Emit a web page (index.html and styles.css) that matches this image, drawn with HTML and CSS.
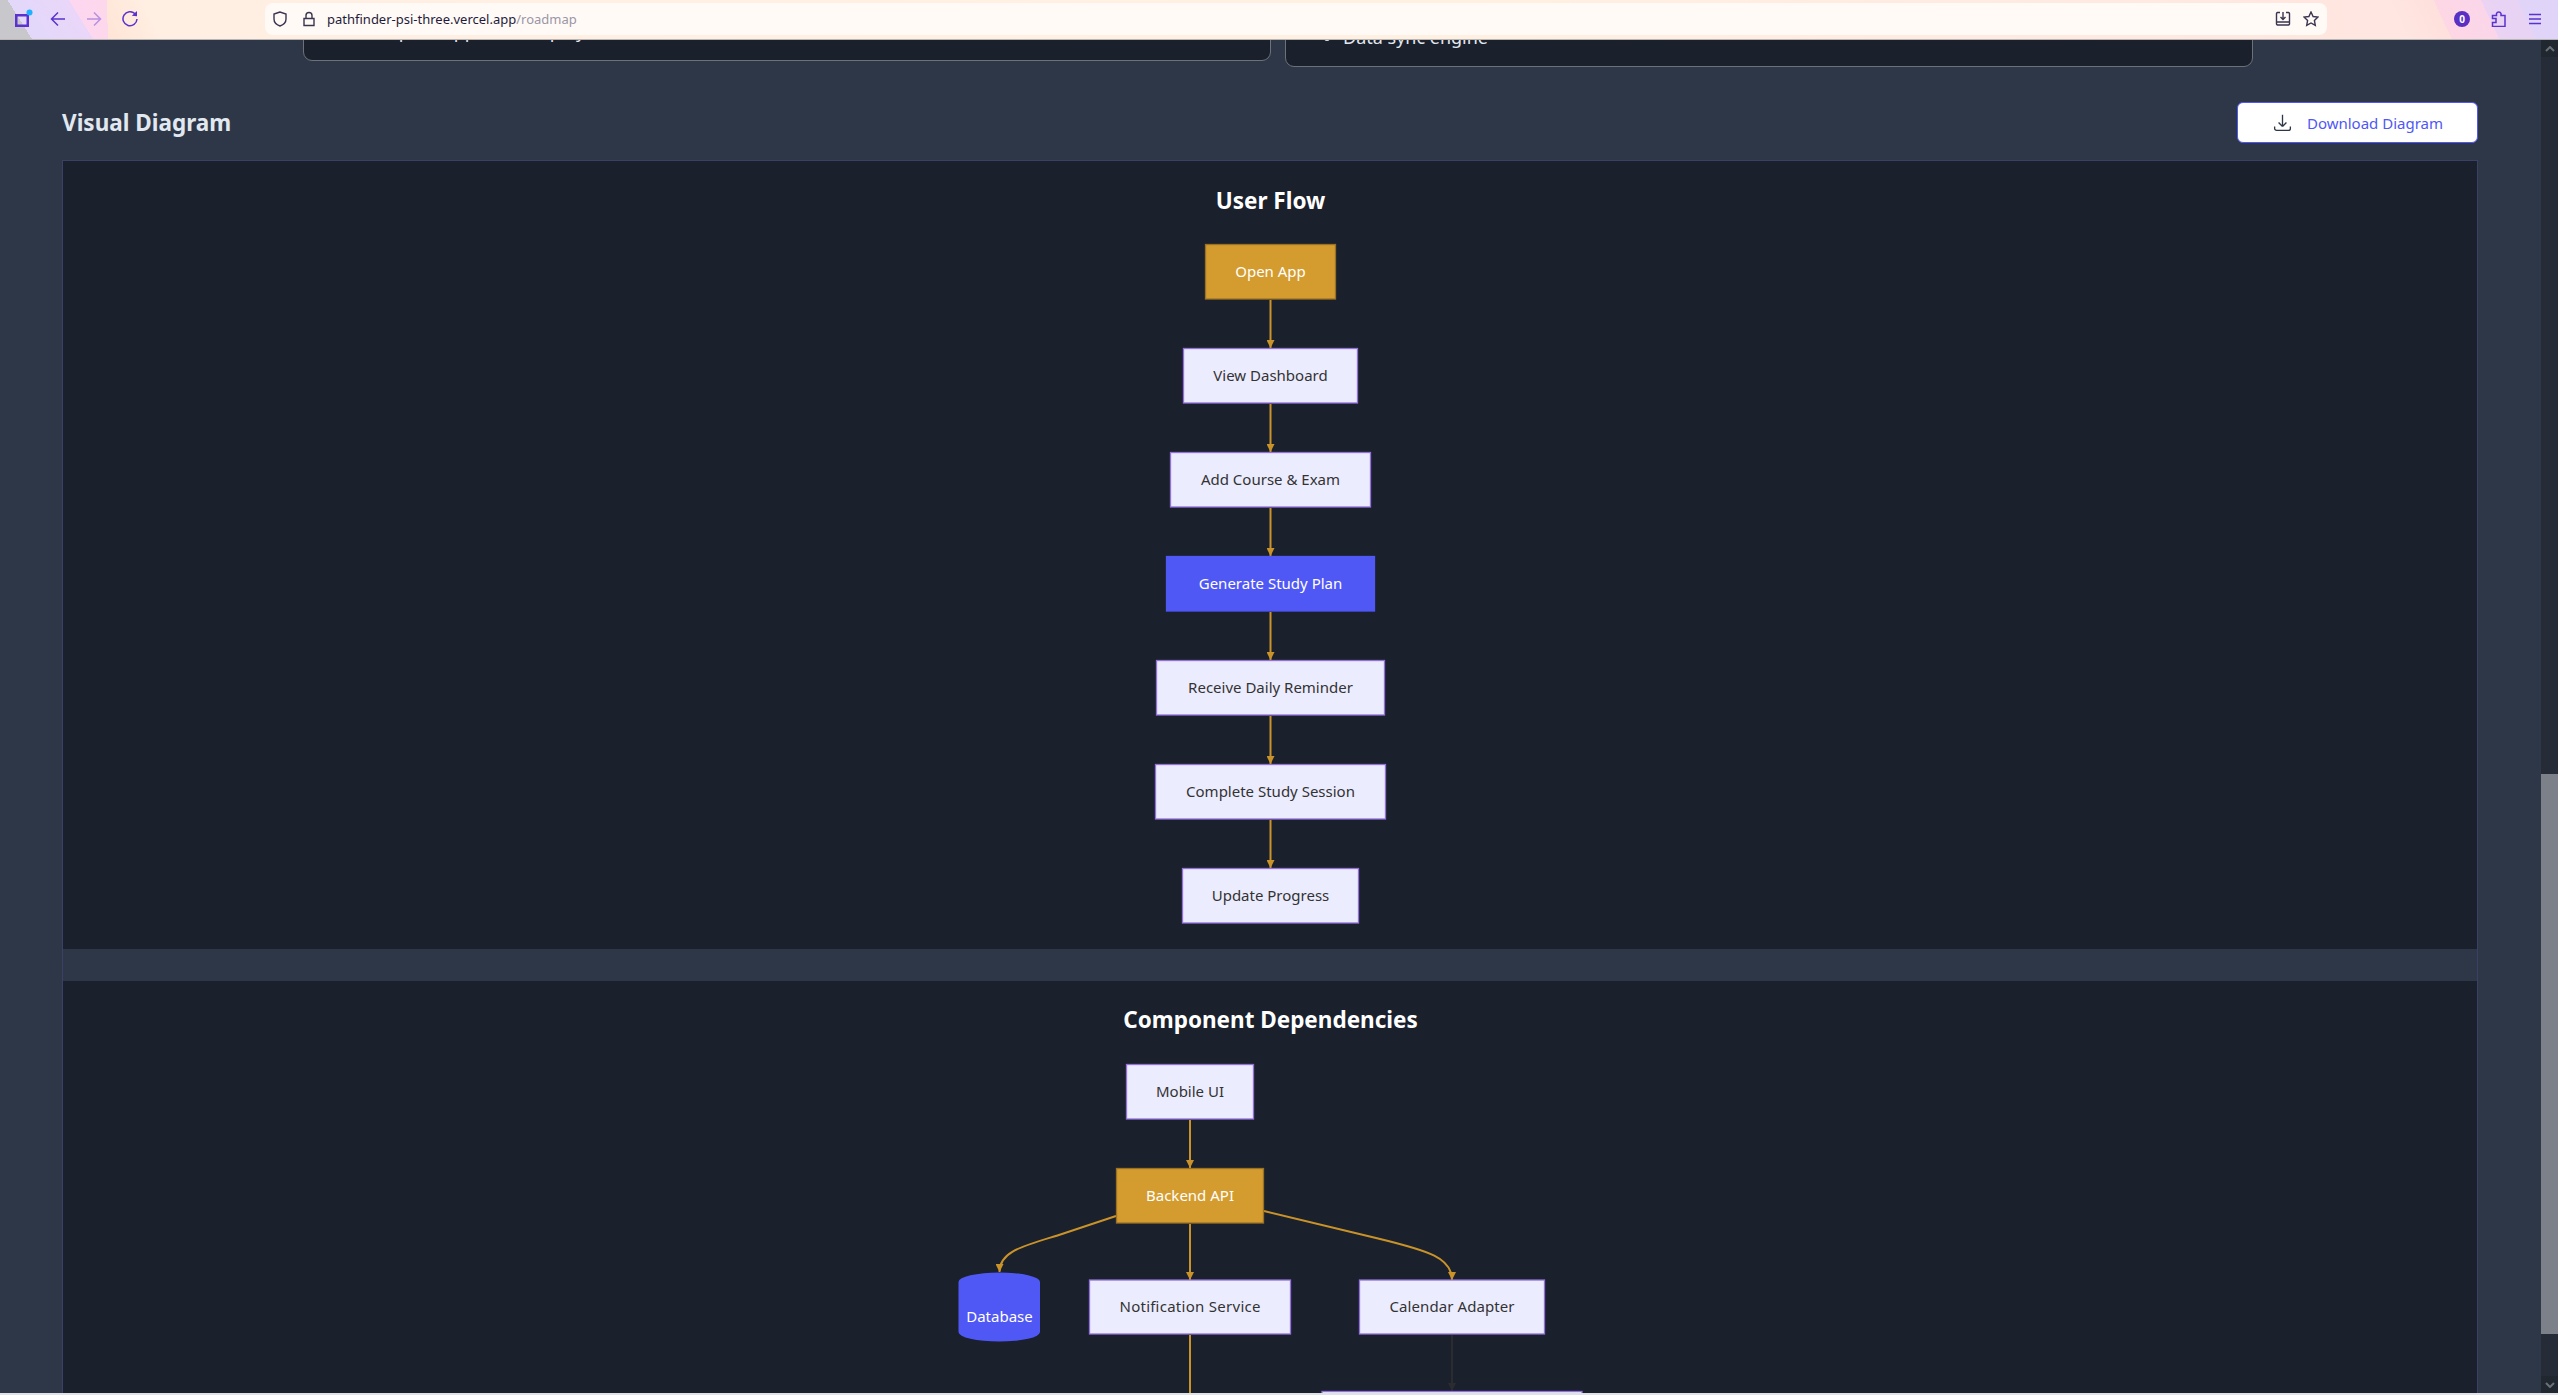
FILE: index.html
```html
<!DOCTYPE html>
<html lang="en">
  <head>
    <meta charset="UTF-8" />
    <meta name="viewport" content="width=device-width, initial-scale=1.0" />
    <title>Pathfinder - Roadmap</title>
    <link rel="stylesheet" href="styles.css">
  </head>
  <body>
    <header class="toolbar">
      <div class="nav-icons">
        <svg class="icon tabs-icon" viewBox="0 0 20 20" width="20" height="20"><path class="purple-fill" d="M2 5h14v13H2zM4.500 7.500v8h9v-8z"/><circle cx="16.500" cy="3.500" r="3" fill="#1cb2ff"/></svg>
        <svg class="icon" viewBox="0 0 16 16" width="16" height="16"><path class="purple" d="M15 8H1.500M8 1.500 1.500 8 8 14.500"/></svg>
        <svg class="icon faded" viewBox="0 0 16 16" width="16" height="16"><path class="purple" d="M1 8h13.500M8 1.500 14.500 8 8 14.500"/></svg>
        <svg class="icon" viewBox="0 0 16 16" width="16" height="16"><path class="purple" d="M13 2.800A7 7 0 1 0 15 8"/><path class="purple-fill" d="M9.800 4.800 15 0v5.200z"/></svg>
      </div>
      <div class="urlbar">
        <svg class="icon" viewBox="0 0 16 16" width="16" height="16"><path class="ink" d="M8 1 2 3v5c0 3.500 2.500 5.800 6 7 3.500-1.200 6-3.500 6-7V3z"/></svg>
        <svg class="icon" viewBox="0 0 16 16" width="16" height="16"><path class="ink" d="M3 7.500h10v7H3zM5 7.500V4.500a3 3 0 0 1 6 0v3"/></svg>
        <span class="url">pathfinder-psi-three.vercel.app<span class="url-path">/roadmap</span></span>
        <span class="urlbar-end">
          <svg class="icon" viewBox="0 0 16 16" width="16" height="16"><path class="ink" d="M5 1.500H2.500a1.500 1.500 0 0 0-1 1V13a1.500 1.500 0 0 0 1 1h11a1.500 1.500 0 0 0 1-1V2.500a1.500 1.500 0 0 0-1-1H11M1.500 11h13"/><path class="ink" d="M8 1v7M5.500 6 8 8.500 10.500 6"/></svg>
          <svg class="icon" viewBox="0 0 16 16" width="16" height="16"><path class="ink" d="m8 1 2.100 4.500 4.900.6-3.600 3.400.9 4.900L8 12l-4.300 2.400.9-4.900L1 6.100l4.900-.6z"/></svg>
        </span>
      </div>
      <div class="tool-icons">
        <span class="badge">0</span>
        <svg class="icon" viewBox="0 0 16 16" width="16" height="16"><path class="purple" d="M1.500 4.500H5.500V2.500A2.400 2.400 0 0 1 10 2.500V4.500H14V15.500H1.500V11.500H5V7.500H1.500Z"/></svg>
        <svg class="icon" viewBox="0 0 14 14" width="14" height="14"><path class="purple" d="M1 2.500h12M1 7h12M1 11.500h12"/></svg>
      </div>
    </header>

    <div class="viewport">
      <main class="page">
        <div class="cards">
          <div class="card card-short">
            <ul>
              <li>Setup for app store deploy</li>
            </ul>
          </div>
          <div class="card">
            <ul>
              <li>Data sync engine</li>
            </ul>
          </div>
        </div>

        <div class="section-head">
          <h2>Visual Diagram</h2>
          <button class="download-btn">
            <svg viewBox="0 0 24 24" width="21" height="21"><path d="M3 16.500v2.250A2.250 2.250 0 0 0 5.250 21h13.500A2.250 2.250 0 0 0 21 18.750V16.500M16.500 12 12 16.500m0 0L7.500 12m4.500 4.500V3"/></svg>
            Download Diagram
          </button>
        </div>

        <div class="diagrams">
          <section class="diagram">
            <svg class="chart" viewBox="63 161 2414 788" width="2414" height="788">
              <defs>
                <marker id="head" viewBox="0 0 8 8" refX="8" refY="4" markerWidth="8" markerHeight="8" markerUnits="userSpaceOnUse" orient="auto"><path d="M0 0 8 4 0 8z" fill="#c9932a"/></marker>
                <marker id="head-dark" viewBox="0 0 8 8" refX="8" refY="4" markerWidth="8" markerHeight="8" markerUnits="userSpaceOnUse" orient="auto"><path d="M0 0 8 4 0 8z" fill="#2b2c30"/></marker>
              </defs>
              <text class="chart-title" x="1270.500" y="209">User Flow</text>

              <path class="edge" d="M1270.500 300V348"/>
              <path class="edge" d="M1270.500 404V452"/>
              <path class="edge" d="M1270.500 508V556"/>
              <path class="edge" d="M1270.500 612V660"/>
              <path class="edge" d="M1270.500 716V764"/>
              <path class="edge" d="M1270.500 820V868"/>

              <rect class="node accent" x="1205.500" y="244.500" width="130" height="54.500"/>
              <text class="label light" x="1270.500" y="277">Open App</text>
              <rect class="node" x="1183.500" y="348.500" width="174" height="54.500"/>
              <text class="label" x="1270.500" y="381">View Dashboard</text>
              <rect class="node" x="1170.500" y="452.500" width="200" height="54.500"/>
              <text class="label" x="1270.500" y="485">Add Course &amp; Exam</text>
              <rect class="node primary" x="1166.500" y="556.500" width="208" height="54.500"/>
              <text class="label light" x="1270.500" y="589">Generate Study Plan</text>
              <rect class="node" x="1156.500" y="660.500" width="228" height="54.500"/>
              <text class="label" x="1270.500" y="693">Receive Daily Reminder</text>
              <rect class="node" x="1155.500" y="764.500" width="230" height="54.500"/>
              <text class="label" x="1270.500" y="797">Complete Study Session</text>
              <rect class="node" x="1182.500" y="868.500" width="176" height="54.500"/>
              <text class="label" x="1270.500" y="901">Update Progress</text>
            </svg>
          </section>

          <section class="diagram">
            <svg class="chart" viewBox="63 981 2414 430" width="2414" height="430">
              <text class="chart-title" x="1270.500" y="1028">Component Dependencies</text>

              <path class="edge" d="M1190 1120V1168"/>
              <path class="edge" d="M1116 1216 1056.700 1235.700C1020 1247 999.500 1252 999.500 1272"/>
              <path class="edge" d="M1190 1224V1280"/>
              <path class="edge" d="M1264 1211 1376 1238C1430 1251 1452 1258 1452 1280"/>
              <path class="edge" d="M1190 1335V1420"/>
              <path class="edge-dark" d="M1452 1335V1391"/>

              <rect class="node" x="1126.500" y="1064.500" width="127" height="54.500"/>
              <text class="label" x="1190" y="1097">Mobile UI</text>
              <rect class="node accent" x="1116.500" y="1168.500" width="147" height="54.500"/>
              <text class="label light" x="1190" y="1201">Backend API</text>
              <path class="cylinder" d="M958.500 1282a40.750 9.500 0 0 1 81.500 0v50a40.750 9.500 0 0 1-81.500 0z"/>
              <text class="label light" x="999.500" y="1322">Database</text>
              <rect class="node" x="1089.500" y="1280" width="201" height="54"/>
              <text class="label" x="1190" y="1312" textLength="141">Notification Service</text>
              <rect class="node" x="1359.500" y="1280" width="185" height="54"/>
              <text class="label" x="1452" y="1312" textLength="125">Calendar Adapter</text>
              <rect class="node" x="1322" y="1391.500" width="260" height="55"/>
            </svg>
          </section>
        </div>
      </main>

      <aside class="scrollbar">
        <span class="scroll-btn"><svg viewBox="0 0 10 6" width="10" height="6"><path d="M1 5 5 1l4 4"/></svg></span>
        <div class="scroll-track"><div class="scroll-thumb"></div></div>
        <span class="scroll-btn"><svg viewBox="0 0 10 6" width="10" height="6"><path d="M1 1l4 4 4-4"/></svg></span>
      </aside>
    </div>
    <div class="window-edge"></div>
  </body>
</html>
```

FILE: styles.css
```css
* {
  box-sizing: border-box;
}

body {
  margin: 0;
  height: 100vh;
  display: flex;
  flex-direction: column;
  overflow: hidden;
  background: #2d3748;
  font-family: "Noto Sans", "Open Sans", sans-serif;
}

/* browser chrome */
.toolbar {
  flex: none;
  height: 40px;
  display: flex;
  align-items: center;
  padding-bottom: 1px;
  border-bottom: 1px solid #b9b5b3;
  background:
    linear-gradient(58deg, #c8c7cb 27px, transparent 27px),
    linear-gradient(58deg, #e4d8fa 40px, #ead6f8 79px, transparent 79px),
    linear-gradient(88deg, #fdd6f0 70px, #fdd8ec 108px, transparent 108px),
    linear-gradient(65deg, #ffe5d6 100px, #ffefe3 150px, #fff1e2 1300px, #ffe6e0 2180px, #fee0dd 2222px, #fdd7e4 2222px, #fbd6ea 2265px, #ead3f3 2265px, #e8d3f5 2298px, #e0d4f8 2298px);
}

.icon {
  display: block;
  flex: none;
  fill: none;
}

.purple {
  fill: none;
  stroke: #5a32cf;
  stroke-width: 1.500;
}

.purple-fill {
  fill: #5a32cf;
  fill-rule: evenodd;
}

.ink {
  fill: none;
  stroke: #3b3550;
  stroke-width: 1.400;
}

.faded {
  opacity: 0.42;
}

.nav-icons {
  width: 265px;
  flex: none;
  display: flex;
  align-items: center;
  gap: 20px;
  padding-left: 13px;
}

.tabs-icon {
  margin-right: -3px;
}

.urlbar {
  flex: none;
  width: 2062px;
  height: 32px;
  display: flex;
  align-items: center;
  gap: 13px;
  padding: 0 8px 0 7px;
  background: #fffaf6;
  border-radius: 8px;
  font-size: 13px;
  color: #1f1b3b;
}

.url {
  margin-left: -3px;
}

.url-path {
  color: #9a96a6;
}

.urlbar-end {
  margin-left: auto;
  display: flex;
  gap: 12px;
}

.tool-icons {
  flex: 1;
  display: flex;
  align-items: center;
  gap: 21px;
  padding-left: 127px;
}

.badge {
  width: 16px;
  height: 16px;
  border-radius: 50%;
  background: #5a2fc4;
  color: #fff;
  font-size: 10px;
  font-weight: 700;
  line-height: 16px;
  text-align: center;
}

/* page */
.viewport {
  flex: 1;
  min-height: 0;
  display: flex;
  overflow: hidden;
}

.page {
  flex: 1;
  min-width: 0;
  padding: 0 63px 0 62px;
}

.cards {
  display: grid;
  grid-template-columns: 968px 968px;
  gap: 14px;
  align-items: start;
  width: 1950px;
  margin: -80px 0 0 241px;
}

.card {
  height: 107px;
  display: flex;
  align-items: flex-end;
  padding: 0 0 17px 57px;
  background: #1a202c;
  border: 1.500px solid #6d7278;
  border-radius: 9px;
  color: #e2e8f0;
  font-size: 18px;
}

.card-short {
  height: 101px;
}

.card ul {
  margin: 0;
  padding: 0;
}

.section-head {
  display: flex;
  justify-content: space-between;
  align-items: center;
  margin-top: 35px;
}

h2 {
  margin: 0;
  color: #e2e8f0;
  font-size: 22.500px;
  font-weight: 700;
}

.download-btn {
  width: 241px;
  height: 41px;
  display: flex;
  align-items: center;
  justify-content: center;
  gap: 14px;
  background: #fff;
  border: 1.500px solid #4f57f5;
  border-radius: 6px;
  color: #4f57f5;
  font: inherit;
  font-size: 15px;
}

.download-btn svg {
  fill: none;
  stroke: #2d3748;
  stroke-width: 1.500;
}

.diagrams {
  margin-top: 17px;
  display: flex;
  flex-direction: column;
  gap: 32px;
  border: 1px solid #3b4066;
  border-bottom: 0;
}

.diagram {
  background: #1a202c;
}

.chart {
  display: block;
}

.chart-title {
  fill: #fff;
  font-size: 22.500px;
  font-weight: 700;
  text-anchor: middle;
}

.edge {
  fill: none;
  stroke: #c9932a;
  stroke-width: 2;
  marker-end: url(#head);
}

.edge-dark {
  fill: none;
  stroke: #2b2c30;
  stroke-width: 2;
  marker-end: url(#head-dark);
}

.node {
  fill: #ececff;
  stroke: #9370db;
  stroke-width: 1.300;
}

.accent {
  fill: #d49c2e;
  stroke: #9a7225;
}

.primary {
  fill: #4f57f5;
  stroke: #4f57f5;
}

.cylinder {
  fill: #4f57f5;
}

.label {
  fill: #333;
  font-size: 15px;
  text-anchor: middle;
}

.light {
  fill: #fff;
}

/* scrollbar */
.scrollbar {
  flex: none;
  width: 17px;
  display: flex;
  flex-direction: column;
  background: #252c38;
}

.scroll-btn {
  flex: none;
  height: 17px;
  display: flex;
  align-items: center;
  justify-content: center;
  background: #20272f;
}

.scroll-btn svg {
  fill: none;
  stroke: #6b7078;
  stroke-width: 2;
}

.scroll-track {
  flex: 1;
  padding-top: 717px;
}

.scroll-thumb {
  height: 560px;
  background: #7c8089;
}

.window-edge {
  flex: none;
  height: 2px;
  background: #dfe3e7;
}
```
